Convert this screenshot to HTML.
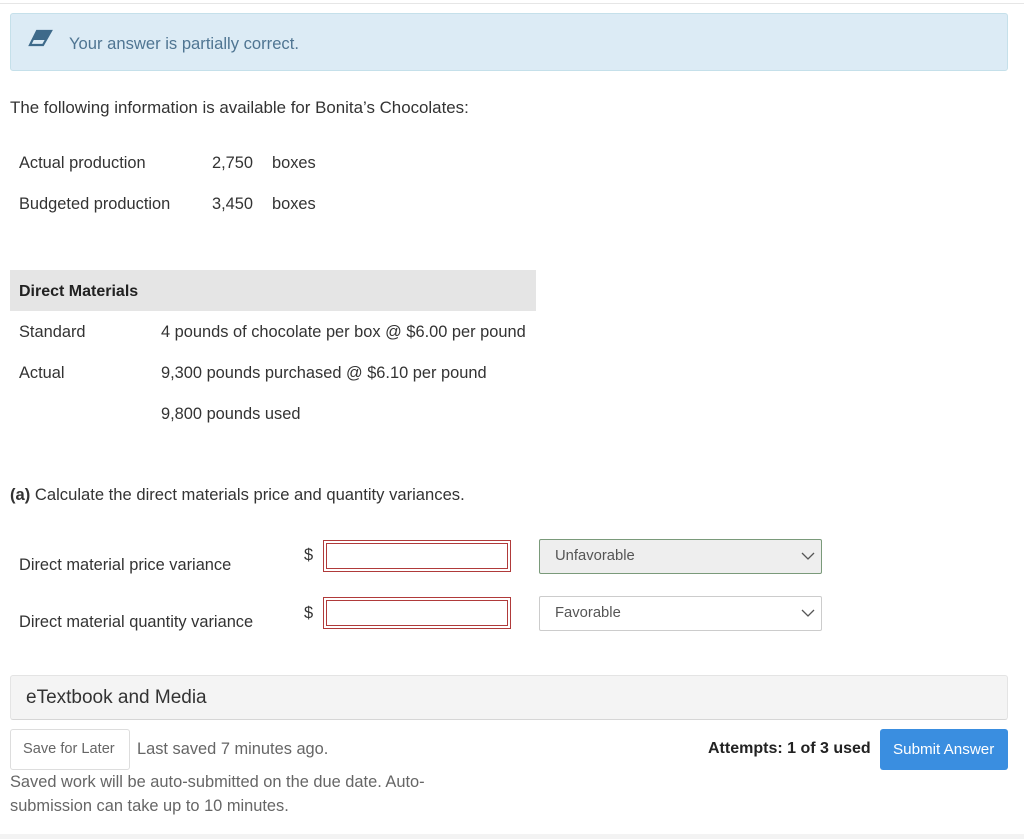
<!DOCTYPE html>
<html><head><meta charset="utf-8"><style>
body{margin:0;width:1024px;height:839px;background:#fff;font-family:"Liberation Sans",sans-serif;color:#333;position:relative;overflow:hidden}
.a{position:absolute;white-space:nowrap;font-size:16.4px}
.top{position:absolute;left:0;top:3px;width:1024px;border-top:1px solid #e6e6e6}
.alert{position:absolute;left:10px;top:13px;width:996px;height:56px;background:#dcebf5;border:1px solid #c5e0ea;border-radius:3px}
.inp{position:absolute;left:323px;width:186px;height:30px;border:1px solid #b03a3a;box-shadow:inset 0 0 0 2px #fff,inset 0 0 0 3px #b03a3a}
.sel{position:absolute;left:539px;width:281px;height:33px;border:1px solid #ccc;border-radius:2px;font-size:14.8px;color:#555}
.sel span{position:absolute;left:15px;top:8px}
.sel svg{position:absolute;right:6px;top:12px}
</style></head><body>
<div class="top"></div>
<div class="alert">
<svg style="position:absolute;left:17px;top:15px" width="26" height="20" viewBox="0 0 26 20"><path d="M9 2h14l-8 14H2z" fill="none" stroke="#3e6a8a" stroke-width="2.2"/><path d="M9 2h14l-5 9H3.5z" fill="#3e6a8a"/></svg>
<div class="a" style="left:58px;top:20px;color:#4f7592;font-size:16.6px">Your answer is partially correct.</div>
</div>
<div class="a" style="left:10px;top:98px;font-size:16.9px">The following information is available for Bonita’s Chocolates:</div>
<div class="a" style="left:19px;top:154px">Actual production</div>
<div class="a" style="left:212px;top:154px">2,750</div>
<div class="a" style="left:272px;top:154px">boxes</div>
<div class="a" style="left:19px;top:195px">Budgeted production</div>
<div class="a" style="left:212px;top:195px">3,450</div>
<div class="a" style="left:272px;top:195px">boxes</div>
<div style="position:absolute;left:10px;top:270px;width:526px;height:41px;background:#e5e5e5"></div>
<div class="a" style="left:19px;top:283px;font-weight:bold;color:#222;font-size:16px">Direct Materials</div>
<div class="a" style="left:19px;top:323px">Standard</div>
<div class="a" style="left:161px;top:323px">4 pounds of chocolate per box @ $6.00 per pound</div>
<div class="a" style="left:19px;top:364px">Actual</div>
<div class="a" style="left:161px;top:364px">9,300 pounds purchased @ $6.10 per pound</div>
<div class="a" style="left:161px;top:405px">9,800 pounds used</div>
<div class="a" style="left:10px;top:485px;font-size:16.6px"><b>(a)</b> Calculate the direct materials price and quantity variances.</div>
<div class="a" style="left:19px;top:556px">Direct material price variance</div>
<div class="a" style="left:19px;top:613px">Direct material quantity variance</div>
<div class="a" style="left:304px;top:546px">$</div>
<div class="a" style="left:304px;top:604px">$</div>
<div class="inp" style="top:540px"></div>
<div class="inp" style="top:597px"></div>
<div class="sel" style="top:539px;background:#eee;border-color:#7a9a7a"><span>Unfavorable</span><svg width="14" height="9"><path d="M1 1l6 6 6-6" fill="none" stroke="#555" stroke-width="1.3"/></svg></div>
<div class="sel" style="top:596px;background:#fff"><span>Favorable</span><svg width="14" height="9"><path d="M1 1l6 6 6-6" fill="none" stroke="#555" stroke-width="1.3"/></svg></div>
<div style="position:absolute;left:10px;top:675px;width:996px;height:43px;background:#f4f4f4;border:1px solid #e4e4e4;border-bottom-color:#d6d6d6;border-radius:3px"></div>
<div class="a" style="left:26px;top:687px;font-size:19px;color:#333">eTextbook and Media</div>
<div style="position:absolute;left:10px;top:729px;width:118px;height:39px;border:1px solid #ddd;border-radius:3px"></div>
<div class="a" style="left:23px;top:741px;font-size:14.6px;color:#666">Save for Later</div>
<div class="a" style="left:137px;top:740px;color:#666">Last saved 7 minutes ago.</div>
<div class="a" style="left:10px;top:773px;color:#666">Saved work will be auto-submitted on the due date. Auto-</div>
<div class="a" style="left:10px;top:797px;color:#666">submission can take up to 10 minutes.</div>
<div class="a" style="left:708px;top:740px;font-weight:bold;color:#222;font-size:16px">Attempts: 1 of 3 used</div>
<div style="position:absolute;left:880px;top:729px;width:128px;height:41px;background:#3a8ee0;border-radius:3px"></div>
<div class="a" style="left:893px;top:741px;color:#fff;font-size:15.2px">Submit Answer</div>
<div style="position:absolute;left:0;top:834px;width:1024px;height:5px;background:#f3f3f3"></div>
</body></html>
